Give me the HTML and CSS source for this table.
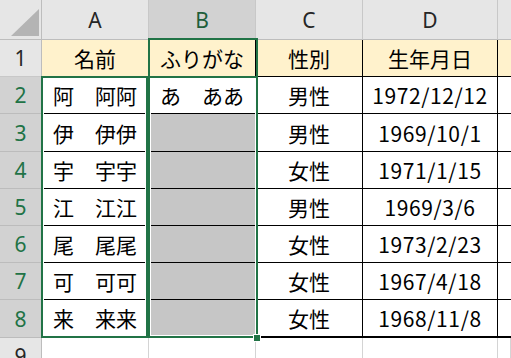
FILE: index.html
```html
<!DOCTYPE html>
<html lang="ja">
<head>
<meta charset="utf-8">
<title>名簿</title>
<link rel="stylesheet" href="styles.css">
</head>
<body>
<div class="sheet">
  <!-- column headers -->
  <div class="corner"><svg width="42" height="39" viewBox="0 0 42 39"><polygon points="39,9 39,36 11,36" fill="#b4b4b4"/></svg></div>
  <div class="colhdr">A</div>
  <div class="colhdr sel">B</div>
  <div class="colhdr">C</div>
  <div class="colhdr">D</div>
  <div class="colhdr last"></div>

  <!-- row 1 -->
  <div class="rowhdr">1</div>
  <div class="cell head center">名前</div>
  <div class="cell head center">ふりがな</div>
  <div class="cell head center">性別</div>
  <div class="cell head center">生年月日</div>
  <div class="cell head extra"></div>

  <div class="rowhdr sel">2</div>
  <div class="cell name">阿　阿阿</div>
  <div class="cell name">あ　ああ</div>
  <div class="cell center">男性</div>
  <div class="cell center num">1972/12/12</div>
  <div class="cell extra"></div>

  <div class="rowhdr sel tall">3</div>
  <div class="cell name">伊　伊伊</div>
  <div class="cell picked"></div>
  <div class="cell center">男性</div>
  <div class="cell center num">1969/10/1</div>
  <div class="cell extra"></div>

  <div class="rowhdr sel">4</div>
  <div class="cell name">宇　宇宇</div>
  <div class="cell picked"></div>
  <div class="cell center">女性</div>
  <div class="cell center num">1971/1/15</div>
  <div class="cell extra"></div>

  <div class="rowhdr sel">5</div>
  <div class="cell name">江　江江</div>
  <div class="cell picked"></div>
  <div class="cell center">男性</div>
  <div class="cell center num">1969/3/6</div>
  <div class="cell extra"></div>

  <div class="rowhdr sel">6</div>
  <div class="cell name">尾　尾尾</div>
  <div class="cell picked"></div>
  <div class="cell center">女性</div>
  <div class="cell center num">1973/2/23</div>
  <div class="cell extra"></div>

  <div class="rowhdr sel">7</div>
  <div class="cell name">可　可可</div>
  <div class="cell picked"></div>
  <div class="cell center">女性</div>
  <div class="cell center num">1967/4/18</div>
  <div class="cell extra"></div>

  <div class="rowhdr sel">8</div>
  <div class="cell name end">来　来来</div>
  <div class="cell picked end"></div>
  <div class="cell center end">女性</div>
  <div class="cell center num end">1968/11/8</div>
  <div class="cell extra end"></div>

  <div class="rowhdr">9</div>
  <div class="cell blank"></div>
  <div class="cell blank"></div>
  <div class="cell blank"></div>
  <div class="cell blank"></div>
  <div class="cell blank"></div>

  <!-- selection outlines drawn over the grid -->
  <div class="range range-a"></div>
  <div class="range range-b1"></div>
  <div class="range range-b"></div>
  <div class="handle"></div>
</div>
</body>
</html>
```

FILE: styles.css
```css
html, body {
  margin: 0;
  padding: 0;
  background: #ffffff;
  overflow: hidden;
}

.sheet {
  position: relative;
  display: grid;
  grid-template-columns: 42px 107px 107px 107px 135px 1fr;
  grid-template-rows: 40px 37px 37px 38px 37px 37px 37px 37px 38px 37px;
  width: 511px;
  height: 358px;
  font-family: "Noto Sans CJK JP", "Noto Sans", sans-serif;
  font-size: 21px;
  color: #000;
}

.sheet > div {
  box-sizing: border-box;
}

/* header strip */
.corner {
  background: #e6e6e6;
  border-right: 1px solid #bdbdbd;
  border-bottom: 1px solid #bdbdbd;
}
.corner svg { display: block; }

.colhdr {
  background: #e6e6e6;
  border-right: 1px solid #c8c8c8;
  border-bottom: 1px solid #bdbdbd;
  display: flex;
  align-items: center;
  justify-content: center;
  font-family: "Noto Sans", "Liberation Sans", sans-serif;
  font-size: 21px;
  color: #262626;
  padding-top: 1px;
}
.colhdr.sel {
  background: #d2d2d2;
  color: #1e5e3a;
  border-bottom: 2px solid #217346;
}
.colhdr.last { border-right: none; }

.rowhdr {
  background: #e6e6e6;
  border-right: 1px solid #bdbdbd;
  border-bottom: 1px solid #c8c8c8;
  display: flex;
  align-items: center;
  justify-content: center;
  font-family: "Noto Sans", "Liberation Sans", sans-serif;
  font-size: 21px;
  color: #262626;
}
.rowhdr.sel {
  background: #d2d2d2;
  color: #217346;
  border-bottom-color: #bcbcbc;
}

/* data cells */
.cell {
  background: #ffffff;
  border-right: 1px solid #000;
  border-bottom: 1px solid #000;
  display: flex;
  align-items: center;
  white-space: nowrap;
  overflow: hidden;
}
.cell.head { background: #fff2cc; }
.cell.center { justify-content: center; }
.cell.name { padding-left: 11px; }
.cell.num { letter-spacing: 0.6px; }
.cell.extra { border-right: none; }
.cell.picked { background: #c6c6c6; }
.cell.end { border-bottom: 2px solid #000; }
.cell.blank {
  border-right: 1px solid #d4d4d4;
  border-bottom: 1px solid #d4d4d4;
}

/* selection ranges */
.range {
  position: absolute;
  border: 2px solid #217346;
  box-shadow: inset 0 0 0 1px #ffffff;
  pointer-events: none;
}
.range-a { left: 41px; top: 76px; width: 107px; height: 262px; }
.range-b1 { left: 148px; top: 38px; width: 110px; height: 40px; box-shadow: none; }
.range-b { left: 148px; top: 76px; width: 110px; height: 262px; }

.handle {
  position: absolute;
  left: 253px;
  top: 334px;
  width: 8px;
  height: 8px;
  box-sizing: border-box;
  background: #217346;
  border: 1px solid #ffffff;
}
```
